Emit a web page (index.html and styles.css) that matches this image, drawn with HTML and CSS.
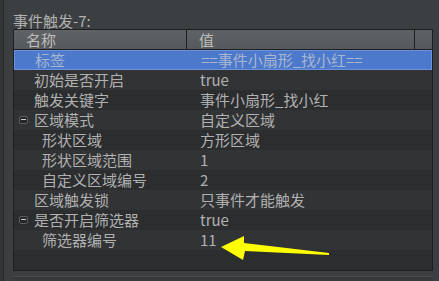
FILE: index.html
```html
<!DOCTYPE html>
<html lang="zh">
<head>
  <meta charset="UTF-8">
  <title>事件触发</title>
  <link rel="stylesheet" href="styles.css">
</head>
<body>
  <div class="side-strip"></div>

  <div class="content">
    <div class="panel-title">事件触发-7:</div>

    <div class="prop-table">
      <div class="prop-header">
        <div class="head-cell">名称</div>
        <div class="head-cell">值</div>
        <div class="head-cell corner"></div>
      </div>

      <div class="prop-row selected">
        <div class="name-cell">标签</div>
        <div class="value-cell">==事件小扇形_找小红==</div>
      </div>
      <div class="prop-row">
        <div class="name-cell">初始是否开启</div>
        <div class="value-cell">true</div>
      </div>
      <div class="prop-row">
        <div class="name-cell">触发关键字</div>
        <div class="value-cell">事件小扇形_找小红</div>
      </div>
      <div class="prop-row">
        <div class="name-cell"><span class="toggle"></span>区域模式</div>
        <div class="value-cell">自定义区域</div>
      </div>
      <div class="prop-row">
        <div class="name-cell child">形状区域</div>
        <div class="value-cell">方形区域</div>
      </div>
      <div class="prop-row">
        <div class="name-cell child">形状区域范围</div>
        <div class="value-cell">1</div>
      </div>
      <div class="prop-row">
        <div class="name-cell child">自定义区域编号</div>
        <div class="value-cell">2</div>
      </div>
      <div class="prop-row">
        <div class="name-cell">区域触发锁</div>
        <div class="value-cell">只事件才能触发</div>
      </div>
      <div class="prop-row">
        <div class="name-cell"><span class="toggle"></span>是否开启筛选器</div>
        <div class="value-cell">true</div>
      </div>
      <div class="prop-row">
        <div class="name-cell child">筛选器编号</div>
        <div class="value-cell">11</div>
      </div>

      <svg class="pointer-arrow" width="120" height="30" viewBox="0 0 120 30">
        <polygon points="0,14 23,3 23,10 108,20 108,22 24,18 22,27" fill="#ffff00"/>
      </svg>
    </div>

    <div class="next-panel"></div>
  </div>
</body>
</html>
```

FILE: styles.css
```css
body {
  margin: 0;
  padding: 0;
  background-color: #3c3f41;
  font-family: "Noto Sans CJK SC", "DejaVu Sans", sans-serif;
  font-size: 15px;
  color: #b1b1b1;
  display: flex;
  height: 281px;
  overflow: hidden;
}
.side-strip {
  width: 3px;
  background-color: #333537;
  border-right: 1px solid #28292a;
}
.content {
  flex: 1;
  padding: 0 6px 0 9px;
}
.panel-title {
  padding-top: 12px;
  line-height: 17px;
  height: 17px;
  white-space: nowrap;
}
.prop-table {
  position: relative;
  height: 240px;
  border: 1px solid #1e1f20;
  background-color: #2b2d2f;
}
.prop-header {
  display: grid;
  grid-template-columns: 173px 1fr 17px;
  height: 19px;
  border-bottom: 1px solid #1e1f20;
  background: linear-gradient(#606365, #56595b);
  color: #bdbdbd;
  line-height: 19px;
}
.head-cell {
  padding-left: 12px;
  border-right: 1px solid #1e1f20;
}
.head-cell.corner {
  border-right: none;
}
.prop-row {
  display: grid;
  grid-template-columns: 173px 1fr;
  height: 20px;
  line-height: 20px;
  white-space: nowrap;
  background-color: #2b2d2f;
}
.prop-row:nth-child(odd) {
  background-color: #313335;
}
.prop-row.selected {
  height: 18px;
  line-height: 18px;
  background-color: #4c79cc;
  border: 1px solid #6a93dc;
  color: #a9b6cf;
}
.name-cell {
  padding-left: 20px;
  position: relative;
}
.name-cell.child {
  padding-left: 28px;
}
.value-cell {
  padding-left: 13px;
}
.toggle {
  position: absolute;
  left: 5px;
  top: 6px;
  width: 7px;
  height: 6px;
  border: 1px solid #5b5e61;
  border-radius: 2px;
  background-color: #252627;
}
.toggle::after {
  content: "";
  position: absolute;
  left: 1px;
  top: 2px;
  width: 5px;
  height: 1px;
  background-color: #d0d0d0;
}
.pointer-arrow {
  position: absolute;
  left: 207px;
  top: 203px;
}
.next-panel {
  margin-top: 5px;
  border-top: 1px solid #4b4e50;
  height: 4px;
  background-color: #37393b;
}
```
